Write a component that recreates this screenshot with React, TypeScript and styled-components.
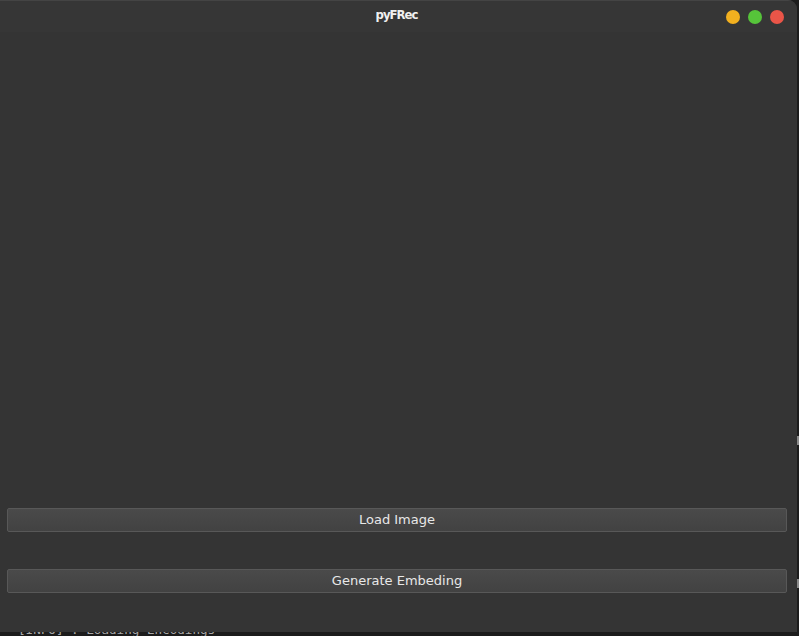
import React from "react";
import styled, { createGlobalStyle } from "styled-components";

const Global = createGlobalStyle`
  html, body { margin: 0; padding: 0; background: #1c1c1c; overflow: hidden; }
  body { width: 799px; height: 636px; font-family: "DejaVu Sans", sans-serif; }
`;

const Screen = styled.div`
  display: flex;
  flex-direction: column;
  width: 799px;
  height: 636px;
  position: relative;
`;

const Window = styled.div`
  display: flex;
  flex-direction: column;
  width: 797px;
  height: 632px;
  background: #343434;
  border-top-right-radius: 9px;
  overflow: hidden;
  flex: none;
`;

const TitleBar = styled.div`
  height: 32px;
  flex: none;
  display: grid;
  grid-template-columns: 1fr auto 1fr;
  align-items: center;
  background: #363636;
  box-shadow: inset 0 1px 0 #444;
`;

const Title = styled.div`
  grid-column: 2;
  font-family: "DejaVu Sans Condensed", "DejaVu Sans", sans-serif;
  font-weight: bold;
  font-size: 13px;
  letter-spacing: -1px;
  color: #f0f0f0;
  margin-top: -3px;
  margin-left: -4px;
`;

const Controls = styled.div`
  grid-column: 3;
  justify-self: end;
  display: flex;
  gap: 8px;
  padding-right: 13px;
  padding-top: 1px;
`;

const Dot = styled.span<{ $c: string }>`
  width: 14px;
  height: 14px;
  border-radius: 50%;
  background: ${(p) => p.$c};
  display: block;
`;

const Body = styled.div`
  flex: 1;
  display: flex;
  flex-direction: column;
  padding: 0 10px 39px 7px;
`;

const Canvas = styled.div`
  flex: 1;
`;

const Button = styled.button<{ $gap?: number }>`
  height: 24px;
  margin-top: ${(p) => p.$gap ?? 0}px;
  border: 1px solid #585858;
  border-radius: 2px;
  background: linear-gradient(#4a4a4a, #424242);
  color: #e8e8e8;
  font-family: "DejaVu Sans", sans-serif;
  font-size: 13px;
  padding: 0;
  line-height: 22px;
  flex: none;
`;

const Terminal = styled.div`
  height: 4px;
  overflow: hidden;
  padding-left: 18px;
  font-family: "DejaVu Sans Mono", monospace;
  font-size: 12.6px;
  line-height: 13px;
  color: #a8a8a8;
  white-space: pre;
`;

const TermLine = styled.div`
  margin-top: -9px;
`;

const EdgeMark = styled.div<{ $top: number; $h: number }>`
  position: absolute;
  right: 0;
  top: ${(p) => p.$top}px;
  width: 2px;
  height: ${(p) => p.$h}px;
  background: #8a8a8a;
`;

export default function App() {
  return (
    <>
      <Global />
      <Screen>
        <Window>
          <TitleBar>
            <Title>pyFRec</Title>
            <Controls>
              <Dot $c="#f2b01f" />
              <Dot $c="#56c43a" />
              <Dot $c="#ea5548" />
            </Controls>
          </TitleBar>
          <Body>
            <Canvas />
            <Button>Load Image</Button>
            <Button $gap={37}>Generate Embeding</Button>
          </Body>
        </Window>
        <Terminal>
          <TermLine>[INFO] : Loading Encodings</TermLine>
        </Terminal>
        <EdgeMark $top={436} $h={9} />
        <EdgeMark $top={579} $h={9} />
      </Screen>
    </>
  );
}
